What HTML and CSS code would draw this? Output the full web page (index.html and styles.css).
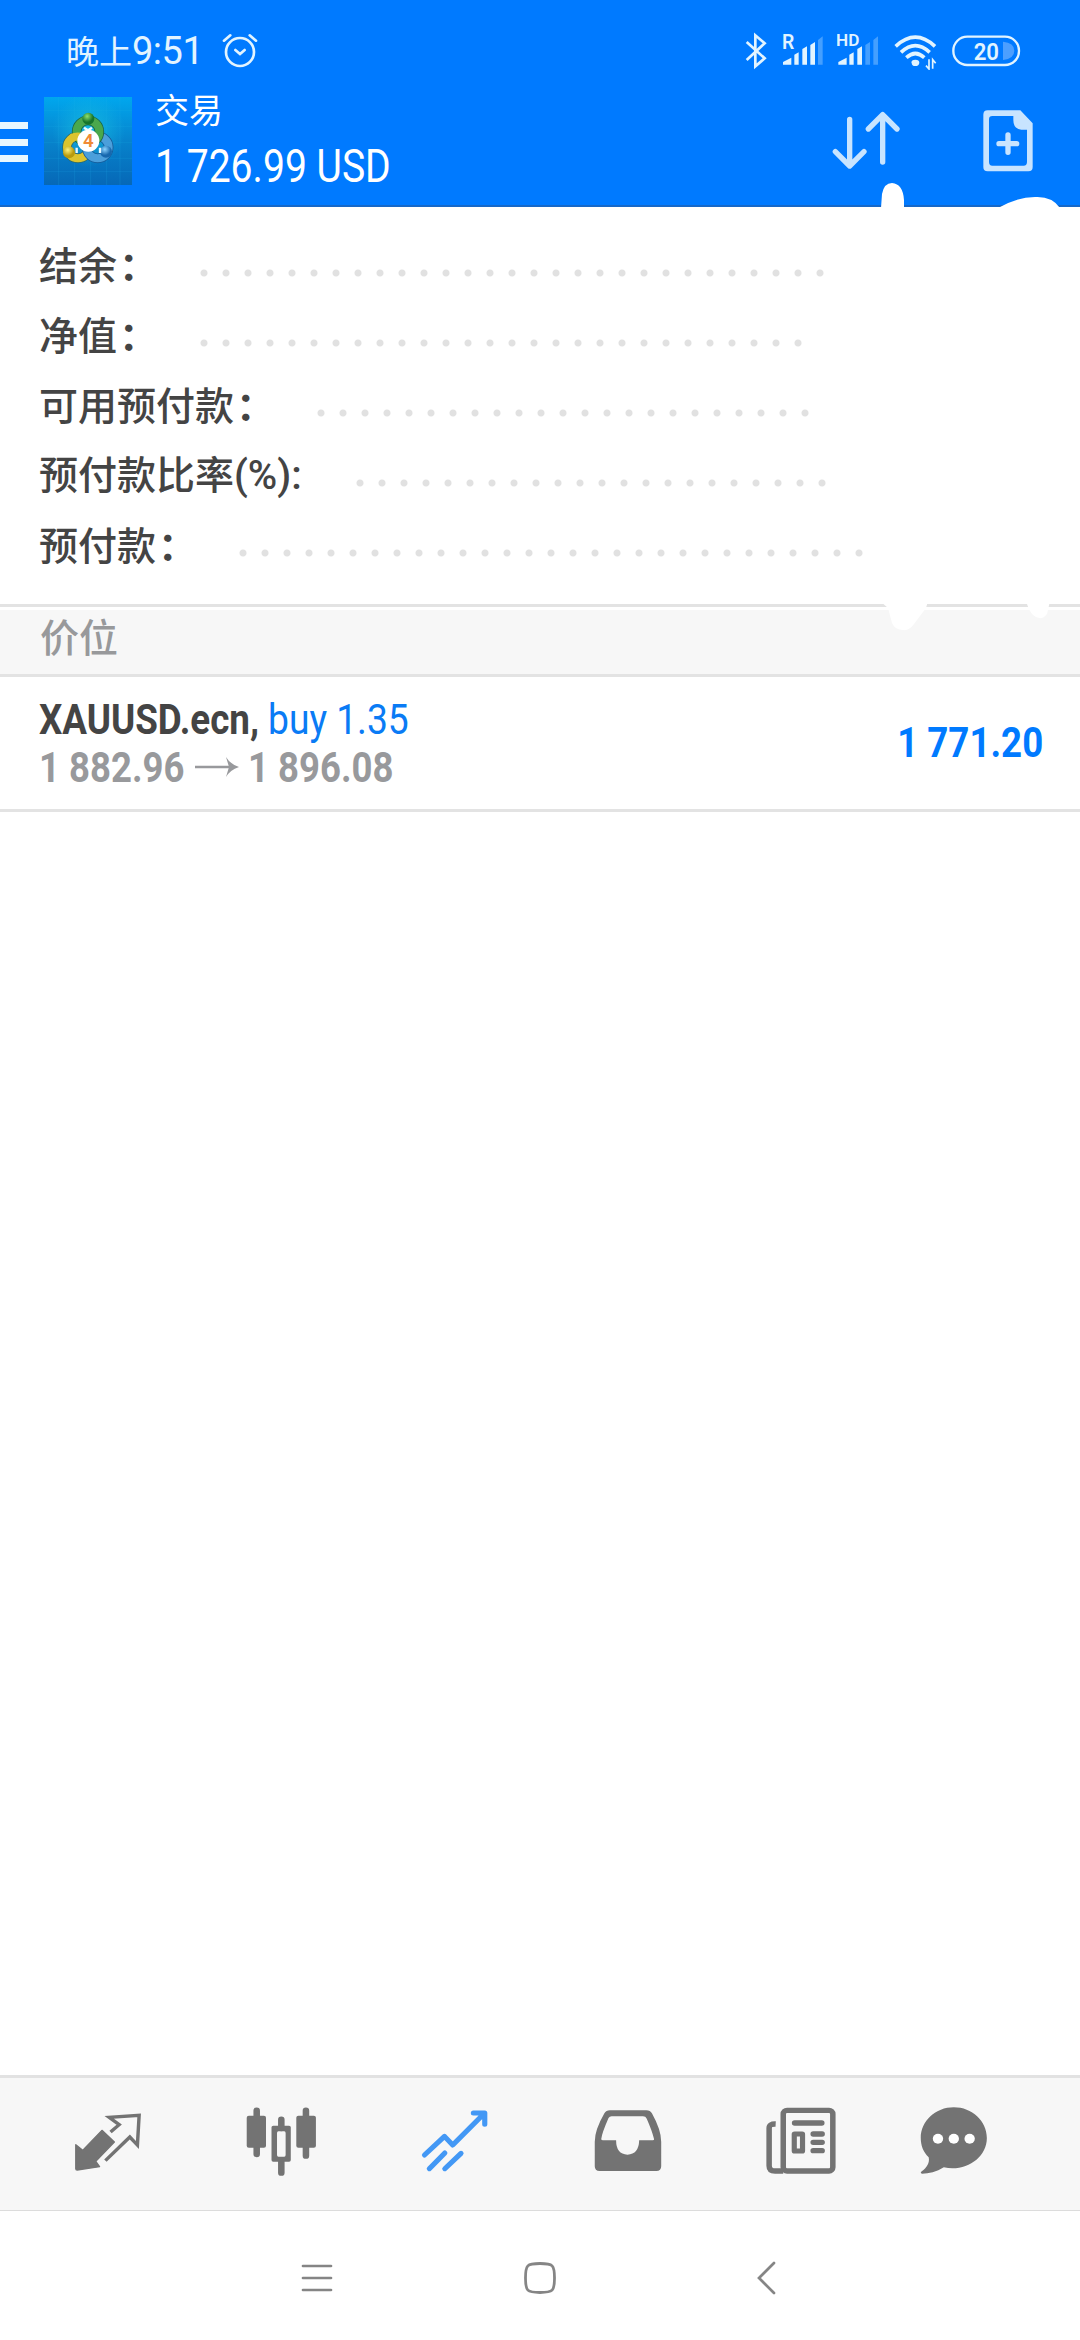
FILE: index.html
```html
<!DOCTYPE html>
<html lang="zh-CN">
<head>
<meta charset="utf-8">
<title>交易</title>
<link rel="stylesheet" href="styles.css">
</head>
<body>
<div class="screen">
  <header class="top">
    <div class="status">
      <div class="clock">晚上<span class="clock-digits">9:51</span></div>
      <svg class="alarm" width="38" height="38" viewBox="0 0 114 114" fill="none" stroke="#e2f4ff" stroke-width="8" stroke-linecap="round">
        <circle cx="57" cy="60" r="42"/><path d="M43 54l14 12 14-12M9 26L28 10M105 26L86 10"/>
      </svg>
      <div class="status-icons">
        <svg width="24" height="38" viewBox="0 0 72 114" fill="none" stroke="#e2f4ff" stroke-width="8"><path d="M8 30L62 79 34 103V10L62 34 8 84"/></svg>
        <svg width="44" height="38" viewBox="0 0 132 114" fill="#e2f4ff">
          <text class="tag" x="0" y="52" font-size="58">R</text>
          <path d="M3 98V90l25-13v21zM37 98V68l13-7v37zM61 98V51l14-8v55zM85 98V39l14-9v68z"/><path opacity=".3" d="M108 98V24l14-11v85z"/>
        </svg>
        <svg width="46" height="38" viewBox="0 0 138 114" fill="#e2f4ff">
          <text class="tag" x="-3" y="41" font-size="47" textLength="70" lengthAdjust="spacingAndGlyphs">HD</text>
          <path d="M4 98V90l25-13v21zM37 98V68l13-7v37zM61 98V51l14-8v55z"/><path opacity=".3" d="M85 98V39l14-9v68zM109 98V24l14-11v85z"/>
        </svg>
        <svg width="46" height="38" viewBox="0 0 138 114" fill="none" stroke="#e2f4ff" stroke-width="11">
          <path d="M8 43Q67-12 126 43M24 61Q67 21 110 61M40 77Q67 52 94 77"/><path fill="#e2f4ff" stroke="none" d="M55 92q0-9 12-9t12 9q-1 10-12 10t-11-10z"/><path stroke-width="5" d="M108 82v29l-9-10M119 110V83l9 11"/>
        </svg>
        <svg width="70" height="38" viewBox="0 0 210 114">
          <rect x="4" y="14" width="197" height="85" rx="42" fill="none" stroke="#e2f4ff" stroke-width="7"/><path fill="#4c9fff" d="M153 29q34 3 34 27t-34 28z"/>
          <text class="tag" x="65" y="84" font-size="74" textLength="76" lengthAdjust="spacingAndGlyphs" fill="#e2f4ff">20</text>
        </svg>
      </div>
    </div>
    <div class="appbar">
      <div class="menu"><i></i><i></i><i></i></div>
      <svg class="logo" width="88" height="88" viewBox="0 0 264 264">
        <defs>
          <linearGradient id="sky" x2="0" y2="1"><stop stop-color="#00a7ee"/><stop offset=".5" stop-color="#0783cc"/><stop offset="1" stop-color="#0668b7"/></linearGradient>
          <radialGradient id="glow"><stop stop-color="#19c5df" stop-opacity=".8"/><stop offset="1" stop-color="#19b5df" stop-opacity="0"/></radialGradient>
          <radialGradient id="gr" cx=".4" cy=".3"><stop stop-color="#8fe06c"/><stop offset="1" stop-color="#16752b"/></radialGradient>
          <radialGradient id="ye" cx=".4" cy=".3"><stop stop-color="#fff27c"/><stop offset="1" stop-color="#b99b0d"/></radialGradient>
          <radialGradient id="bl" cx=".4" cy=".3"><stop stop-color="#8bd3ff"/><stop offset="1" stop-color="#1768ae"/></radialGradient>
        </defs>
        <rect width="264" height="264" fill="url(#sky)"/>
        <path stroke="#22b3e8" stroke-opacity=".28" stroke-width="2" d="M0 40h264M0 88h264M0 136h264M0 184h264M0 224h264M44 0v264M92 0v264M140 0v264M188 0v264M228 0v264"/>
        <circle cx="134" cy="100" r="110" fill="url(#glow)"/>
        <g fill="none">
          <circle cx="102" cy="151" r="33" stroke="#2e6a6a" stroke-width="29"/><circle cx="102" cy="151" r="33" stroke="#dcc42e" stroke-width="24"/>
          <circle cx="161" cy="151" r="33" stroke="#155b99" stroke-width="29"/><circle cx="161" cy="151" r="33" stroke="#4b9fdb" stroke-width="24"/>
          <circle cx="132" cy="104" r="34" stroke="#1b6448" stroke-width="29"/><circle cx="132" cy="104" r="34" stroke="#4aa84c" stroke-width="24"/>
          <path stroke="#dcc42e" stroke-width="24" d="M84 123Q94 117 108 119"/>
        </g>
        <circle cx="133" cy="65" r="18" fill="url(#gr)"/><circle cx="75" cy="166" r="18" fill="url(#ye)"/><circle cx="186" cy="164" r="18" fill="url(#bl)"/>
        <path stroke="#eafaff" stroke-width="7" fill="none" d="M120 92l12 8 12-8M98 152v16M168 152v16"/>
        <circle cx="133" cy="131" r="33" fill="#fff"/>
        <text class="tag" x="133" y="151" font-size="56" text-anchor="middle" fill="#f08a35">4</text>
      </svg>
      <div class="title">
        <div class="title-name">交易</div>
        <div class="title-sum"><span class="cond sum">1 726.99 USD</span></div>
      </div>
      <svg class="sort" width="70" height="62" viewBox="0 0 210 186" fill="none" stroke="#c8e4ff" stroke-width="16" stroke-linecap="round" stroke-linejoin="round"><path d="M56 28V164M13 125l43 43 43-43M155 156V20M112 57l43-43 43 43"/></svg>
      <svg class="neworder" width="50" height="62" viewBox="0 0 150 186">
        <path fill="#c8e4ff" fill-rule="evenodd" d="M14 1H112l37 39V171q0 13-13 13H14Q1 184 1 171V14Q1 1 14 1zM28 18q-10 0-10 10V156q0 11 10 11H122q10 0 10-11V59H115Q91 56 91 30V18z"/>
        <path stroke="#c8e4ff" stroke-width="16" stroke-linecap="round" d="M48 101h53M75 75v52"/>
      </svg>
    </div>
    <svg class="blot blot-top" width="200" height="25" viewBox="0 0 200 25" fill="#fff"><path d="M1 25L2 11Q4 0 12 0 23 1 24 17V25zM118 25Q137 14 155 14 172 13 180 25z"/></svg>
  </header>

  <section class="summary">
    <div class="line"><span class="label">结余<b>：</b></span><span class="dots d29"></span></div>
    <div class="line"><span class="label">净值<b>：</b></span><span class="dots d28"></span></div>
    <div class="line"><span class="label">可用预付款<b>：</b></span><span class="dots d23"></span></div>
    <div class="line"><span class="label">预付款比率<span class="latin">(%):</span></span><span class="dots d22"></span></div>
    <div class="line"><span class="label">预付款<b>：</b></span><span class="dots d29"></span></div>
  </section>

  <section class="positions">
    <div class="caption">价位
      <svg class="blot blot-low" width="180" height="32" viewBox="0 0 180 32" fill="#fff"><path d="M0 0L8 7 12 22Q15 29 23 29 29 30 34 23L46 7 48 0zM146 0Q149 10 153 14 161 21 167 13L170 0z"/></svg>
    </div>
    <div class="deal">
      <div class="deal-info">
        <div class="deal-row"><span class="cond symbol">XAUUSD.ecn,</span><span class="cond side">buy 1.35</span></div>
        <div class="deal-row prices"><span class="cond open">1 882.96</span>
          <svg class="arrow" width="44" height="20" viewBox="0 0 44 20"><path fill="none" stroke="#98999c" stroke-width="2.600" d="M0 10H38"/><path fill="#98999c" d="M31 0Q35 7 44 10 35 13 31 20L34 10z"/></svg>
          <span class="cond current">1 896.08</span></div>
      </div>
      <span class="cond profit">1 771.20</span>
    </div>
  </section>

  <nav class="tabs">
    <svg viewBox="210 130 210 230" preserveAspectRatio="none"><path fill="#737373" stroke="#737373" stroke-width="4" stroke-linejoin="round" d="M297 212l36 35-54 58 11 16-65 10q-4 0-4-4v-72l20 17z"/><path fill="none" stroke="#737373" stroke-width="10" d="M322 217l25-22-29-22 87-6-5 89-22-24-71 71"/></svg>
    <svg viewBox="711 130 210 230" preserveAspectRatio="none"><g fill="none" stroke="#737373" stroke-width="19" stroke-linecap="round"><path d="M745 153V283M888 153V288M816.500 180V205M816.500 305V339"/></g><rect x="716" y="168" width="56" height="96" rx="6" fill="#737373"/><rect x="860" y="168" width="57" height="96" rx="6" fill="#737373"/><path fill="#737373" fill-rule="evenodd" d="M793 198h46q5 0 5 5v98q0 5-5 5h-46q-5 0-5-5v-98q0-5 5-5zM808 215q-4 0-4 5v66q0 5 4 5h17q4 0 4-5v-66q0-5-4-5z"/></svg>
    <svg viewBox="1215 130 210 230" preserveAspectRatio="none" fill="none" stroke="#4398f5" stroke-width="15" stroke-linecap="round" stroke-linejoin="round"><path d="M1231 286l58-56 24 26 92-95M1373 160h33v34M1290 280l-45 47M1337 281l-47 46"/></svg>
    <svg viewBox="150 130 210 230" preserveAspectRatio="none"><path fill="#737373" fill-rule="evenodd" d="M202 152H308q11 0 16 9 27 50 27 85v74q0 14-14 14H172q-14 0-14-14v-74q0-35 28-85 5-9 16-9zM207 170q-6 0-9 5-19 45-21 62-1 5 5 5h38q0 42 33 43 33-1 34-43h39q6 0 4-5-6-25-21-60-3-7-11-7z"/></svg>
    <svg viewBox="653 130 210 230" preserveAspectRatio="none"><g fill="none" stroke="#737373" stroke-width="16"><rect x="706" y="152" width="144" height="182" rx="11"/><path d="M684 193Q665 192 665 206V318Q665 334 682 334H706"/><path stroke-linecap="round" d="M739 190h79M793 223h26M793 248h26M793 273h26"/><rect x="738" y="223" width="24" height="51" stroke-width="15" rx="1"/></g></svg>
    <svg class="chat" viewBox="1095 130 210 230" preserveAspectRatio="none"><path fill="#737373" d="M1199 143C1252 143 1295 184 1295 235 1295 295 1232 338 1170 323 1149 337 1126 342 1107 342 1102 341 1102 338 1106 335 1120 325 1130 309 1126 293 1110 277 1103 257 1103 235 1103 184 1146 143 1199 143z"/><g fill="#fff"><circle cx="1153" cy="237" r="15"/><circle cx="1199" cy="237" r="15"/><circle cx="1245" cy="237" r="15"/></g></svg>
  </nav>

  <footer class="sysnav">
    <svg width="32" height="34" viewBox="0 0 32 34" fill="none" stroke="#858585" stroke-width="2.700" stroke-linecap="round"><path d="M2 5H30M2 17H30M2 29H30"/></svg>
    <svg class="home" width="34" height="34" viewBox="0 0 34 34" fill="none" stroke="#858585" stroke-width="2.800"><path d="M17 2.500C30 2.500 31.500 4 31.500 17S30 31.500 17 31.500 2.500 30 2.500 17 4 2.500 17 2.500z"/></svg>
    <svg width="20" height="34" viewBox="0 0 20 34" fill="none" stroke="#858585" stroke-width="2.700" stroke-linecap="round"><path d="M17 2L2 17 17 32"/></svg>
  </footer>
</div>
</body>
</html>
```
FILE: styles.css
```css
* { box-sizing: border-box; }
body { margin: 0; background: #fff; }
svg { display: block; flex: none; }

.screen {
  width: 1080px;
  height: 2340px;
  display: flex;
  flex-direction: column;
  background: #fff;
  color: #444;
  font-family: Roboto, "Noto Sans CJK SC", sans-serif;
}
.tag { font-family: Roboto, sans-serif; font-weight: 600; }
.cond {
  display: inline-block;
  white-space: pre;
  transform-origin: left center;
}

/* Header */
.top {
  position: relative;
  height: 207px;
  background: #007aff;
  border-bottom: 2px solid #1668c8;
}
.status {
  height: 85px;
  padding: 16px 58px 0 66px;
  display: flex;
  align-items: center;
  color: #e2f4ff;
}
.clock {
  font: 400 33px/38px "Noto Sans CJK SC", sans-serif;
  white-space: nowrap;
  width: 136px;
}
.clock-digits {
  font-family: Roboto, sans-serif;
  font-size: 38px;
  font-weight: 400;
  letter-spacing: -.5px;
}
.alarm { margin-left: 19px; }
.status-icons { margin-left: auto; display: flex; }
.status-icons svg:nth-child(1) { margin-right: 14px; }
.status-icons svg:nth-child(2) { margin-right: 11px; }
.status-icons svg:nth-child(3) { margin-right: 10px; }
.status-icons svg:nth-child(4) { margin-right: 13px; }

.appbar { display: flex; align-items: flex-start; height: 120px; }
.menu {
  width: 28px;
  padding-top: 37px;
  display: grid;
  gap: 9.500px;
}
.menu i { height: 7px; background: #e8f7ff; }
.logo { margin: 12px 0 0 16px; }
.title { margin-left: 23px; width: 260px; color: #fff; }
.title-name {
  margin-top: 7px;
  font: 400 34px/34px "Noto Sans CJK SC", sans-serif;
}
.title-sum { font-size: 46px; line-height: 54px; margin-top: 13px; }
.sum { transform: scaleX(.85); }
.sort { margin: 25px 0 0 auto; }
.neworder { margin: 25px 47px 0 82px; }
.blot { position: absolute; }
.blot-top { left: 880px; top: 183px; }

/* Account summary */
.summary {
  height: 400px;
  padding: 23px 0 0 39px;
  border-bottom: 3px solid #e3e3e3;
}
.line { height: 70px; display: flex; align-items: center; }
.label {
  padding-bottom: 3px;
  font: 500 39px/57px "Noto Sans CJK SC", sans-serif;
  white-space: nowrap;
}
.label b { font-weight: 700; display: inline-block; text-indent: 2px; width: 39px; }
.latin { font-family: Roboto, sans-serif; font-size: 40px; }
.dots {
  height: 8px;
  margin: 15px 0 0 37px;
  background: radial-gradient(circle at 11px 4px, #e1e1e1 3px, transparent 4px) 0 0 / 22px 8px repeat-x;
}
.d22 { width: 484px; margin-left: 47px; }
.d23 { width: 506px; }
.d28 { width: 616px; }
.d29 { width: 638px; }

/* Positions */
.positions { padding-top: 3px; }
.caption {
  position: relative;
  height: 67px;
  padding: 0 40px;
  background: #f7f7f7;
  border-bottom: 3px solid #e3e3e3;
  color: #98999b;
  font: 500 39px/51px "Noto Sans CJK SC", sans-serif;
}
.blot-low { left: 880px; top: -9px; }
.deal {
  height: 135px;
  padding: 18px 37px 0 39px;
  display: flex;
  justify-content: space-between;
  border-bottom: 3px solid #e3e3e3;
  font-size: 43px;
  line-height: 48px;
}
.deal-row { display: flex; height: 48px; align-items: center; white-space: nowrap; }
.symbol { width: 229px; font-weight: 700; transform: scaleX(.855); }
.side { color: #0a7bf5; transform: scaleX(.865); }
.prices { color: #98999c; font-weight: 700; }
.open { width: 156px; transform: scaleX(.85); }
.current { margin-left: 9px; transform: scaleX(.85); }
.profit {
  margin-top: 23px;
  color: #007aff;
  font-weight: 700;
  transform: scaleX(.853);
  transform-origin: right center;
}

/* Bottom tabs */
.tabs {
  margin-top: auto;
  height: 136px;
  flex: none;
  padding: 25px 0 0 72.300px;
  display: flex;
  gap: 100.900px;
  background: #f7f7f7;
  border-top: 3px solid #e2e2e2;
  border-bottom: 1px solid #dcdcdc;
}
.tabs svg { width: 72.300px; height: 76.700px; }
.tabs .chat { margin-left: -20px; }

.sysnav {
  height: 129px;
  flex: none;
  padding: 50px 303px 0 301px;
  display: flex;
}
.home { margin: 0 auto 0 190px; }
```
